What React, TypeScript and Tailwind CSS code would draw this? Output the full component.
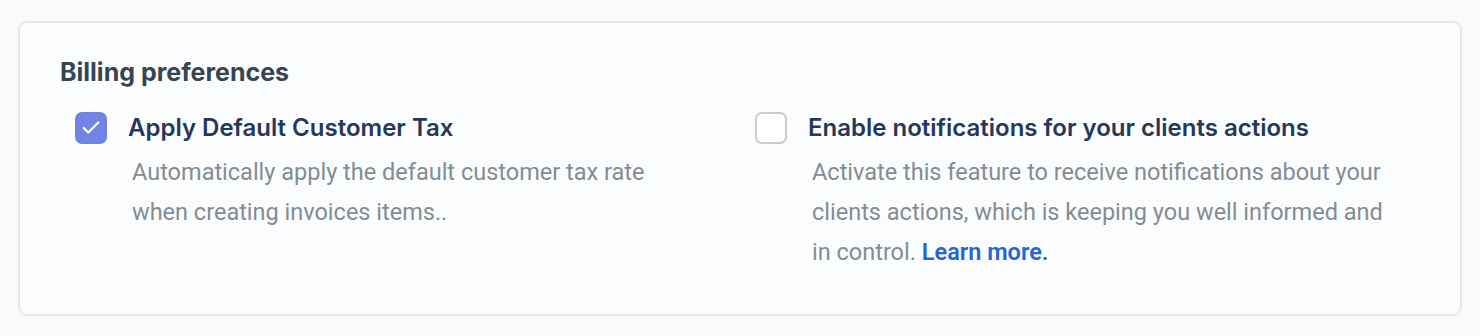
import { Check } from 'lucide-react'

interface PrefProps {
  checked: boolean
  title: string
  children: React.ReactNode
  descWidth: string
}

function Preference({ checked, title, children, descWidth }: PrefProps) {
  return (
    <div className="pl-[15px]">
      <div className="flex items-center gap-[21px] h-8 mt-[2px]">
        {checked ? (
          <div className="w-8 h-8 rounded-[7px] bg-[#7284e1] flex items-center justify-center shrink-0">
            <Check className="w-[22px] h-[22px] text-white" strokeWidth={2.4} />
          </div>
        ) : (
          <div className="w-8 h-8 rounded-[7px] border-2 border-[#c9cbcf] bg-white shrink-0" />
        )}
        <h3 className="font-['Inter',sans-serif] text-[24px] font-semibold text-[#27375a] leading-8">
          {title}
        </h3>
      </div>
      <p
        className={`mt-2 ml-[57px] font-['Roboto',sans-serif] text-[23.5px] leading-10 text-[#838c93] ${descWidth}`}
      >
        {children}
      </p>
    </div>
  )
}

export default function App() {
  return (
    <div className="min-h-[336px] w-[1480px] bg-[#f9fafc] pt-[21px] px-[18px]">
      <div className="rounded-[9px] border-2 border-[#e6e8ec] bg-[#fbfcfe] pt-[33px] pb-[42px] px-10">
        <h2 className="font-['Inter',sans-serif] text-[25px] font-bold text-[#36454f] leading-8">
          Billing preferences
        </h2>
        <div className="mt-[22px] grid grid-cols-2">
          <Preference checked title="Apply Default Customer Tax" descWidth="w-[560px]">
            Automatically apply the default customer tax rate when creating invoices items..
          </Preference>
          <Preference checked={false} title="Enable notifications for your clients actions" descWidth="w-[590px]">
            Activate this feature to receive notifications about your clients actions, which is
            keeping you well informed and in control.{' '}
            <a href="#" className="font-semibold text-[#2464d8]">
              Learn more.
            </a>
          </Preference>
        </div>
      </div>
    </div>
  )
}
